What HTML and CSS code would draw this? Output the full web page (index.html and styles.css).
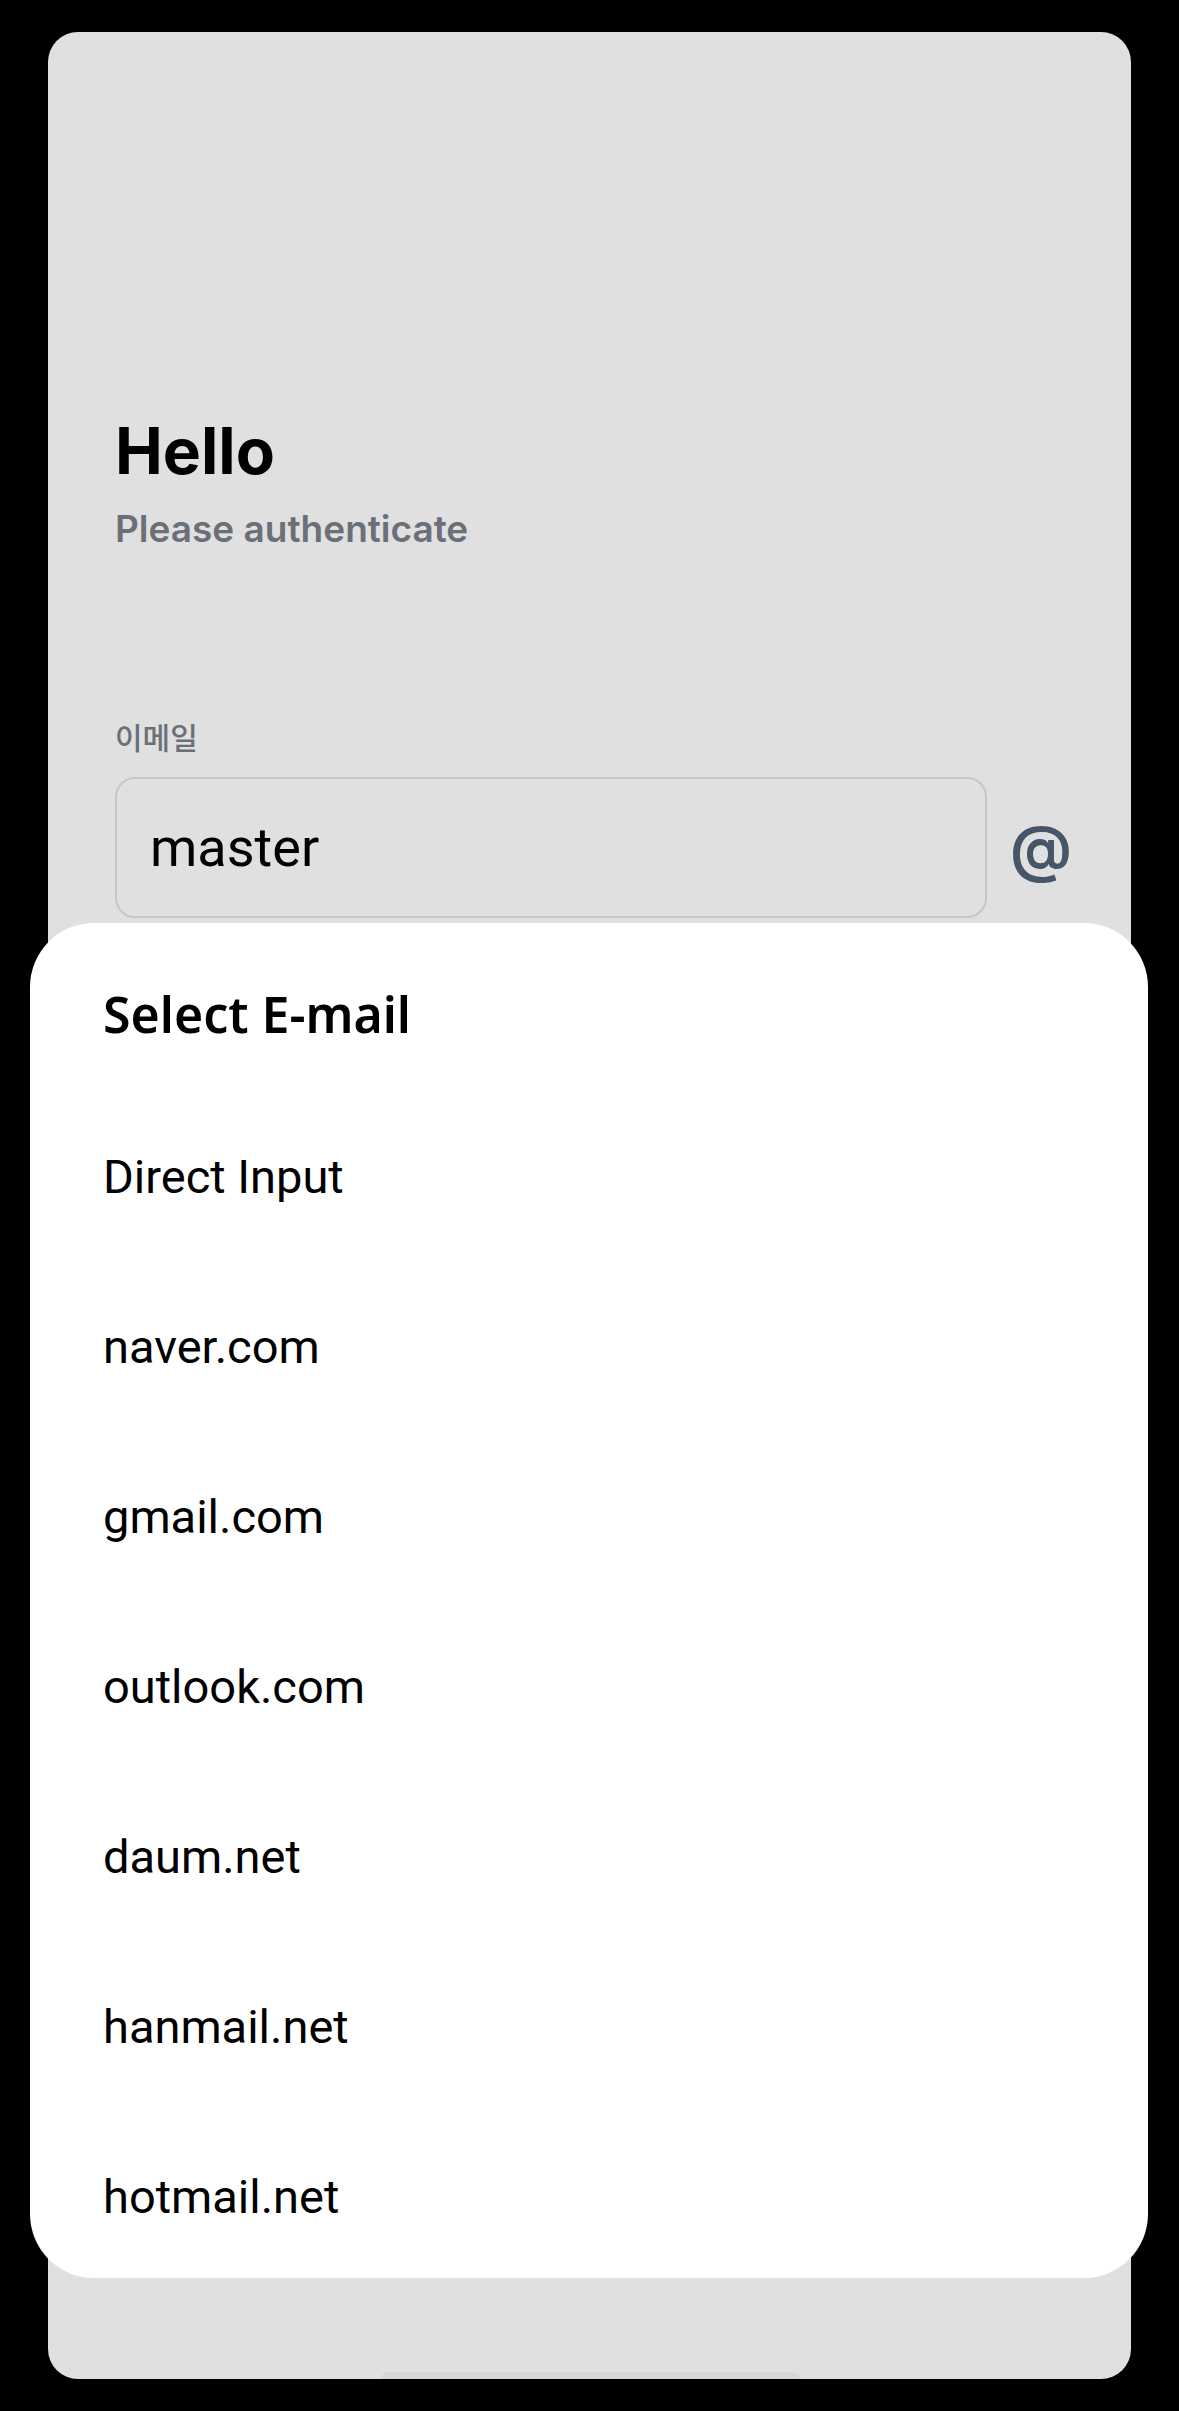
FILE: index.html
```html
<!DOCTYPE html>
<html lang="ko">
<head>
    <meta charset="UTF-8">
    <title>Login</title>
    <link rel="stylesheet" href="styles.css">
</head>
<body>

<div class="screen">
    <h1 class="title">Hello</h1>
    <p class="subtitle">Please authenticate</p>

    <label class="field-label" for="email">이메일</label>
    <div class="email-row">
        <input type="text" id="email" class="email-input" value="master">
        <span class="at-sign">@</span>
    </div>

    <!-- domain picker sheet, opened over the form -->
    <div class="sheet">
        <h2 class="sheet-title">Select E-mail</h2>
        <ul class="domain-list">
            <li>Direct Input</li>
            <li>naver.com</li>
            <li>gmail.com</li>
            <li>outlook.com</li>
            <li>daum.net</li>
            <li>hanmail.net</li>
            <li>hotmail.net</li>
        </ul>
    </div>

    <div class="home-bar"></div>
</div>

</body>
</html>
```

FILE: styles.css
```css
body {
    margin: 0;
    background-color: #000000;
    font-family: Inter, "Noto Sans CJK KR", sans-serif;
}
.screen {
    position: relative;
    margin: 32px 48px 0;
    height: 2347px;
    box-sizing: border-box;
    padding: 380px 66px 0 67px;
    background-color: #e0e0e0;
    border-radius: 30px;
}
.title {
    margin: 0;
    font-size: 64px;
    line-height: 77px;
    font-weight: 700;
    color: #000000;
}
.subtitle {
    margin: 18px 0 0;
    font-size: 37px;
    line-height: 44px;
    font-weight: 600;
    color: #6b7078;
}
.field-label {
    display: block;
    margin-top: 168px;
    font-family: "Noto Sans CJK KR", sans-serif;
    font-size: 30px;
    line-height: 35px;
    font-weight: 500;
    color: #6b7078;
}
.email-row {
    display: flex;
    align-items: center;
    gap: 23px;
    margin-top: 23px;
}
.email-input {
    flex: 1;
    height: 141px;
    box-sizing: border-box;
    padding: 0 0 0 33px;
    border: 2px solid #c4c6c9;
    border-radius: 20px;
    background: transparent;
    font-family: Roboto, sans-serif;
    font-size: 54px;
    color: #000000;
    outline: none;
}
.at-sign {
    width: 55px;
    font-size: 62px;
    line-height: 1;
    font-weight: 600;
    color: #475569;
}
.sheet {
    position: absolute;
    left: -18px;
    right: -17px;
    top: 891px;
    padding: 61px 0 0 73px;
    background-color: #ffffff;
    border-radius: 64px;
}
.sheet-title {
    margin: 0 0 48px;
    font-family: "Noto Sans", sans-serif;
    font-size: 50px;
    line-height: 60px;
    font-weight: 600;
    color: #000000;
}
.domain-list {
    list-style: none;
    margin: 0;
    padding: 0;
}
.domain-list li {
    height: 170px;
    line-height: 170px;
    font-family: Roboto, sans-serif;
    font-size: 47px;
    color: #000000;
}
.domain-list li:last-child {
    height: 166px;
}
.home-bar {
    position: absolute;
    left: 50%;
    bottom: -8px;
    width: 419px;
    height: 15px;
    margin-left: -209px;
    background-color: #d6d6d6;
    border-radius: 8px;
}
```
